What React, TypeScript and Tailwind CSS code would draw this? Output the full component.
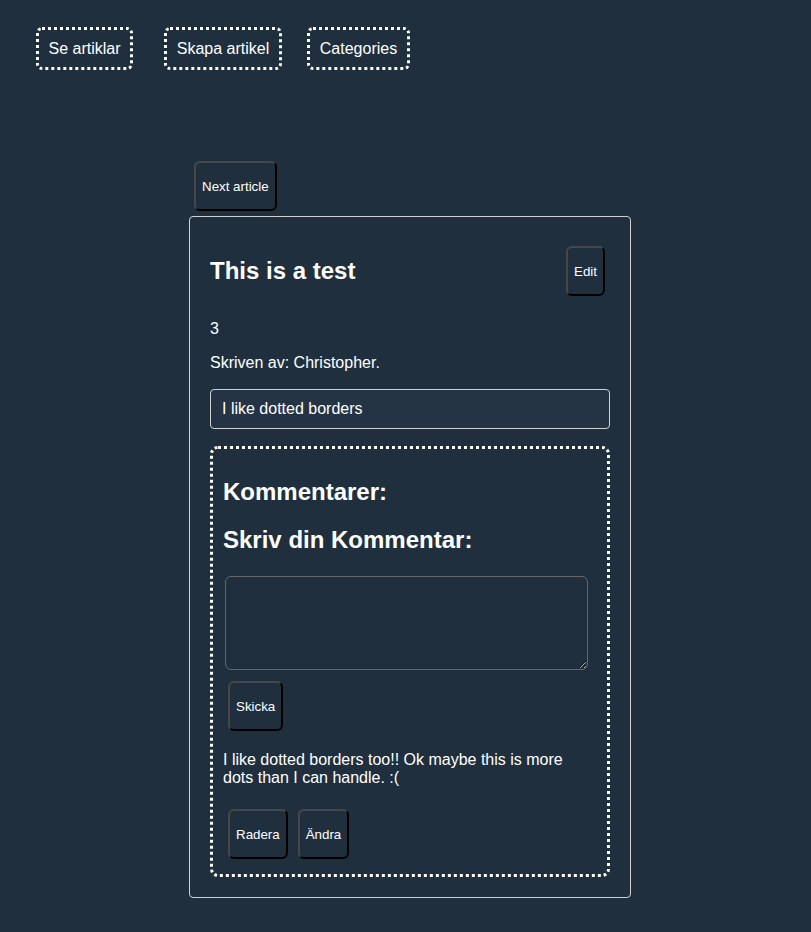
import React, { useState } from "react";

const navLinks = [
  { label: "Se artiklar", cls: "w-[97px]" },
  { label: "Skapa artikel", cls: "w-[118px] ml-[31px]" },
  { label: "Categories", cls: "w-[103px] ml-[25px]" },
];

function OutsetButton({ children }: { children: React.ReactNode }) {
  return (
    <button className="h-[50px] px-[6px] pt-[1px] rounded-[6px] border-2 border-t-[#474747] border-l-[#474747] border-r-black border-b-black bg-[#1f2f3e] text-white text-[13.33px] leading-none">
      {children}
    </button>
  );
}

export default function App() {
  const [comment, setComment] = useState("");

  return (
    <div className="min-h-[932px] bg-[#1f2f3e] text-white font-['Liberation_Sans',Arial,sans-serif]">
      {/* Top nav */}
      <nav className="flex pt-[27px] pl-[36px]">
        {navLinks.map((link) => (
          <a
            key={link.label}
            href="#"
            className={`${link.cls} h-[43px] flex items-center justify-center border-[3px] border-dotted border-white rounded-[6px] text-[16px]`}
          >
            {link.label}
          </a>
        ))}
      </nav>

      <div className="ml-[189px] w-[442px] mt-[91px]">
        <div className="pl-[5px] pb-[5px]">
          <OutsetButton>Next article</OutsetButton>
        </div>

        {/* Article card */}
        <div className="border border-[#d0d0d0] rounded-[4px] px-[20px] pt-[29px] pb-[20px]">
          <div className="flex items-center justify-between pr-[5px]">
            <h2 className="text-[24px] font-bold">This is a test</h2>
            <OutsetButton>Edit</OutsetButton>
          </div>

          <p className="mt-[24px] text-[16px] leading-[18px]">3</p>
          <p className="mt-[16px] text-[16px] leading-[18px]">Skriven av: Christopher.</p>

          <div className="mt-[17px] h-[40px] flex items-center px-[11px] border border-[#d0d0d0] rounded-[4px] bg-[#253444] text-[16px]">
            I like dotted borders
          </div>

          {/* Comments */}
          <div className="mt-[17px] border-[3px] border-dotted border-white rounded-[8px] pl-[10px] pr-[19px] pt-[29px] pb-[15px]">
            <h3 className="text-[24px] font-bold leading-[28px]">Kommentarer:</h3>
            <h3 className="mt-[20px] text-[24px] font-bold leading-[28px]">Skriv din Kommentar:</h3>

            <textarea
              value={comment}
              onChange={(e) => setComment(e.target.value)}
              className="mt-[22px] ml-[2px] block w-[363px] h-[94px] border border-[#666] rounded-[6px] bg-[#1f2f3e] text-white"
            />
            <div className="mt-[11px] pl-[5px]">
              <OutsetButton>Skicka</OutsetButton>
            </div>

            <p className="mt-[20px] text-[16px] leading-[18px]">
              I like dotted borders too!! Ok maybe this is more dots than I can handle. :(
            </p>

            <div className="mt-[22px] pl-[5px] flex gap-[10px]">
              <OutsetButton>Radera</OutsetButton>
              <OutsetButton>Ändra</OutsetButton>
            </div>
          </div>
        </div>
      </div>
    </div>
  );
}
